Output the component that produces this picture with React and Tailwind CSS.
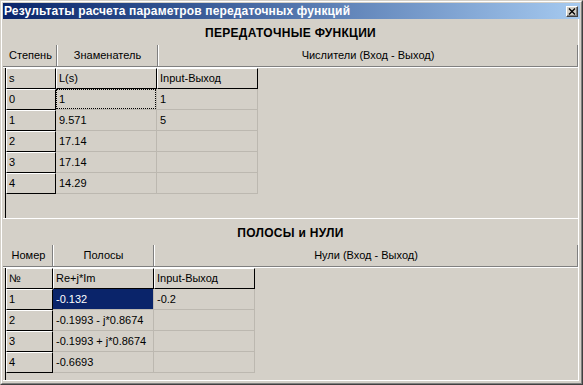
import React from "react";

function FixedCell({ w, children }) {
  return (
    <div
      className={`${w} h-full shrink-0 border-t border-l border-t-white border-l-white border-r border-b border-r-black border-b-black pl-[2px] flex items-center text-[11px] leading-none whitespace-nowrap`}
    >
      {children}
    </div>
  );
}

function DataCell({ children, selected, focus }) {
  return (
    <div
      className={`relative w-[101px] h-full shrink-0 border-r border-b border-[#bcb8b0] pl-[3px] flex items-center text-[11px] leading-none whitespace-nowrap ${
        selected ? "bg-[#0a246a] text-white" : ""
      }`}
    >
      {focus && <div className="absolute inset-0 border border-dotted border-black" />}
      <span className="relative">{children}</span>
    </div>
  );
}

function Grid({ fixedW, headers, rows, h, selected, focus }) {
  return (
    <div className={`ml-[2px] border-l border-black ${h} flex flex-col`}>
      <div className="flex h-[21px]">
        {headers.map((t, i) => (
          <FixedCell key={i} w={i === 0 ? fixedW : "w-[101px]"}>
            {t}
          </FixedCell>
        ))}
      </div>
      {rows.map((r, ri) => (
        <div key={ri} className="flex h-[21px]">
          <FixedCell w={fixedW}>{r[0]}</FixedCell>
          {r.slice(1).map((c, ci) => (
            <DataCell
              key={ci}
              selected={selected && selected[0] === ri && selected[1] === ci}
              focus={focus && focus[0] === ri && focus[1] === ci}
            >
              {c}
            </DataCell>
          ))}
        </div>
      ))}
    </div>
  );
}

function Strip({ w1, t1, t2, t3 }) {
  return (
    <>
      <div className="h-[22px] flex border-b border-[#808080] text-[11px]">
        <div className={`${w1} shrink-0 border-r border-[#808080] flex items-center justify-center pl-[2px]`}>
          {t1}
        </div>
        <div className="w-[101px] shrink-0 border-l border-l-white border-r border-r-[#808080] flex items-center justify-center">
          {t2}
        </div>
        <div className="flex-1 border-l border-l-white border-r border-r-[#808080] flex items-center justify-center">
          {t3}
        </div>
      </div>
      <div className="h-px bg-white" />
    </>
  );
}

function Panel({ title, strip, grid }) {
  return (
    <div className="w-[576px] border-r border-b border-white flex flex-col">
      <div className="h-[26px] pt-[2px] flex items-center justify-center font-bold text-[12px] tracking-[0.3px]">
        {title}
      </div>
      {strip}
      {grid}
    </div>
  );
}

export default function App() {
  return (
    <div className="w-[583px] h-[385px] bg-[#d4d0c8] border border-t-[#d4d0c8] border-l-[#d4d0c8] border-r-[#404040] border-b-[#404040] font-['Liberation_Sans',Arial,sans-serif] text-black overflow-hidden">
      <div className="h-full border border-t-white border-l-white border-r-[#808080] border-b-[#808080] p-px flex flex-col">
        <div className="h-[16px] shrink-0 bg-linear-to-r from-[#0a246a] to-[#a6caf0] flex items-center justify-between pl-[1px] pr-[2px]">
          <span className="text-white font-bold text-[12px] leading-none tracking-[0.15px] whitespace-nowrap">
            Результаты расчета параметров передаточных функций
          </span>
          <div className="w-[12px] h-[11px] bg-[#d4d0c8] border-t border-l border-t-white border-l-white border-r border-b border-r-[#404040] border-b-[#404040] shadow-[inset_-1px_-1px_#808080] flex items-center justify-center">
            <svg width="8" height="7" viewBox="0 0 8 7">
              <path d="M1 0.5 L7 6.5 M7 0.5 L1 6.5" stroke="black" strokeWidth="1.4" />
            </svg>
          </div>
        </div>
        <Panel
          title="ПЕРЕДАТОЧНЫЕ ФУНКЦИИ"
          strip={<Strip w1="w-[54px]" t1="Степень" t2="Знаменатель" t3="Числители (Вход - Выход)" />}
          grid={
            <Grid
              fixedW="w-[50px]"
              h="h-[150px]"
              headers={["s", "L(s)", "Input-Выход"]}
              rows={[
                ["0", "1", "1"],
                ["1", "9.571", "5"],
                ["2", "17.14", ""],
                ["3", "17.14", ""],
                ["4", "14.29", ""],
              ]}
              focus={[0, 0]}
            />
          }
        />
        <Panel
          title="ПОЛОСЫ и НУЛИ"
          strip={<Strip w1="w-[50px]" t1="Номер" t2="Полосы" t3="Нули (Вход - Выход)" />}
          grid={
            <Grid
              fixedW="w-[47px]"
              h="h-[112px]"
              headers={["№", "Re+j*Im", "Input-Выход"]}
              rows={[
                ["1", "-0.132", "-0.2"],
                ["2", "-0.1993 - j*0.8674", ""],
                ["3", "-0.1993 + j*0.8674", ""],
                ["4", "-0.6693", ""],
              ]}
              selected={[0, 0]}
            />
          }
        />
      </div>
    </div>
  );
}
